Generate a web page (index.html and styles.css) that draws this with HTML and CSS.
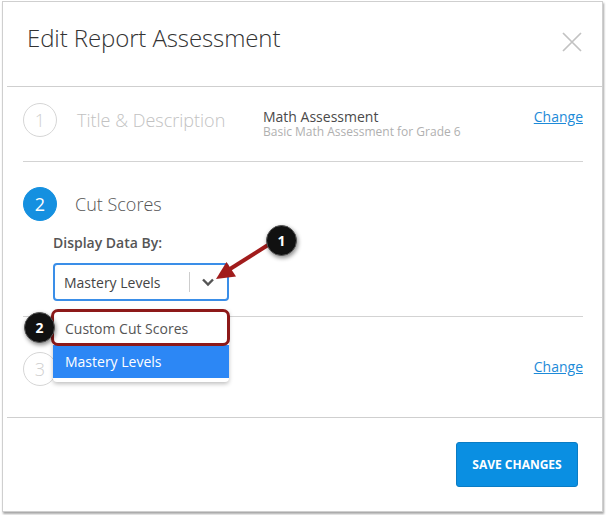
FILE: index.html
```html
<!DOCTYPE html>
<html lang="en">
  <head>
    <meta charset="UTF-8" />
    <meta name="viewport" content="width=device-width, initial-scale=1.0" />
    <title>Edit Report Assessment</title>
    <link rel="stylesheet" href="styles.css">
  </head>
  <body>
    <div class="frame">
      <div class="dialog">
        <header class="dialog-header">
          <h1 class="dialog-title">Edit Report Assessment</h1>
          <button class="close" aria-label="Close">
            <svg width="20" height="20" viewBox="0 0 20 20">
              <path d="M1 1 L19 19 M19 1 L1 19" stroke="#c2c2c2" stroke-width="1.7" fill="none" />
            </svg>
          </button>
        </header>

        <div class="dialog-body">
          <section class="step step-first">
            <div class="step-row">
              <span class="step-num">1</span>
              <span class="step-title">Title &amp; Description</span>
              <div class="step-summary">
                <div class="summary-name">Math Assessment</div>
                <div class="summary-desc">Basic Math Assessment for Grade 6</div>
              </div>
              <a class="change" href="#">Change</a>
            </div>
          </section>

          <section class="step step-active">
            <div class="step-row">
              <span class="step-num">2</span>
              <span class="step-title">Cut Scores</span>
            </div>
            <div class="field">
              <label class="field-label">Display Data By:</label>
              <div class="select">
                <span class="select-value">Mastery Levels</span>
                <span class="select-sep"></span>
                <svg class="select-arrow" width="14" height="10" viewBox="0 0 14 10">
                  <path d="M2 2.5 L7 7.5 L12 2.5" stroke="#555" stroke-width="2.4" fill="none" />
                </svg>
                <ul class="menu">
                  <li class="menu-item">Custom Cut Scores</li>
                  <li class="menu-item current">Mastery Levels</li>
                </ul>
              </div>
            </div>
          </section>

          <section class="step step-last">
            <div class="step-row">
              <span class="step-num">3</span>
              <span class="step-title"></span>
              <a class="change" href="#">Change</a>
            </div>
          </section>
        </div>

        <footer class="dialog-footer">
          <button class="save">SAVE CHANGES</button>
        </footer>
      </div>
    </div>

    <!-- callouts -->
    <div class="callout-box"></div>
    <svg class="callout-arrow" width="612" height="515" viewBox="0 0 612 515">
      <line x1="268" y1="245" x2="230" y2="269" stroke="#a11c1c" stroke-width="4" />
      <polygon points="216,279 226.5,262 236,276.5" fill="#a11c1c" />
    </svg>
    <span class="callout callout-1">1</span>
    <span class="callout callout-2">2</span>
  </body>
</html>
```

FILE: styles.css
```css
* {
  box-sizing: border-box;
}
body {
  margin: 0;
  position: relative;
  width: 612px;
  height: 515px;
  overflow: hidden;
  background: #fff;
  font-family: "Open Sans", "Liberation Sans", sans-serif;
  color: #444;
}
.frame {
  margin: 1px 0 0 2px;
  width: 601px;
  height: 511px;
  border: 1px solid #cfcfcf;
  box-shadow: 1px 2px 2px rgba(0, 0, 0, 0.35);
  padding-left: 4px;
}
.dialog {
  height: 100%;
  display: flex;
  flex-direction: column;
}

/* header */
.dialog-header {
  height: 85px;
  flex: none;
  display: flex;
  align-items: flex-start;
  padding: 20px 20px 0 20px;
  border-bottom: 1px solid #cfcfcf;
}
.dialog-title {
  margin: 0;
  font-size: 24px;
  line-height: 32px;
  font-weight: 300;
  color: #333;
  letter-spacing: -0.1px;
}
.close {
  margin: 10px 0 0 auto;
  padding: 0;
  border: none;
  background: none;
  width: 20px;
  height: 20px;
}
.close svg {
  display: block;
}

/* steps */
.dialog-body {
  flex: none;
  padding: 0 19px 0 16px;
}
.step {
  border-bottom: 1px solid #d3d3d3;
}
.step-first {
  padding: 16px 0 24px;
}
.step-active {
  padding: 25px 0 15px;
}
.step-last {
  padding: 35px 0 31px;
  border-bottom: none;
}
.step-row {
  display: flex;
  align-items: center;
  height: 34px;
}
.step-num {
  width: 34px;
  height: 34px;
  flex: none;
  border-radius: 50%;
  border: 1px solid #d6d6d6;
  display: flex;
  align-items: center;
  justify-content: center;
  font-size: 18px;
  font-weight: 300;
  color: #cfcfcf;
}
.step-title {
  width: 186px;
  margin-left: 20px;
  font-size: 18px;
  font-weight: 300;
  color: #c2c2c2;
}
.step-active .step-num {
  background: #1590e0;
  border-color: #1590e0;
  color: #fff;
  font-weight: 400;
}
.step-active .step-title {
  margin-left: 18px;
  color: #555;
}
.step-summary {
  align-self: flex-start;
  padding-top: 6px;
}
.summary-name {
  font-size: 14px;
  line-height: 16px;
  color: #4a4a4a;
}
.summary-desc {
  font-size: 12px;
  line-height: 14px;
  color: #b0b0b0;
}
.change {
  margin-left: auto;
  align-self: flex-start;
  padding-top: 6px;
  font-size: 14px;
  line-height: 16px;
  color: #1d8ad8;
  text-decoration: underline;
}
.step-last .change {
  padding-top: 7px;
}

/* select field */
.field {
  margin: 12px 0 0 30px;
}
.field-label {
  display: block;
  font-size: 14px;
  line-height: 20px;
  font-weight: 600;
  color: #555;
  margin-bottom: 10px;
}
.select {
  position: relative;
  width: 176px;
  height: 38px;
  border: 2px solid #3a8ee8;
  border-radius: 4px;
  display: flex;
  align-items: center;
  padding-left: 9px;
}
.select-value {
  font-size: 14px;
  color: #444;
}
.select-sep {
  margin-left: auto;
  width: 1px;
  height: 20px;
  background: #cdcdcd;
}
.select-arrow {
  margin: 0 12px 0 11px;
}
.menu {
  position: absolute;
  left: -2px;
  top: 45px;
  width: 176px;
  margin: 0;
  padding: 0 0 4px;
  list-style: none;
  background: #fff;
  border-radius: 0 0 4px 4px;
  box-shadow: 0 2px 4px rgba(0, 0, 0, 0.25);
  z-index: 1;
}
.menu-item {
  height: 35px;
  display: flex;
  align-items: center;
  padding: 1px 0 0 12px;
  font-size: 14px;
  color: #555;
}
.menu-item.current {
  height: 33px;
  padding-top: 0;
  background: #2c87f5;
  color: #fff;
}

/* footer */
.dialog-footer {
  flex: 1;
  border-top: 1px solid #cfcfcf;
  display: flex;
  justify-content: flex-end;
  align-items: flex-start;
  padding: 24px 24px 0 0;
}
.save {
  width: 122px;
  height: 45px;
  border: 1px solid #0a7cc4;
  border-radius: 3px;
  background: #0a8fe2;
  color: #fff;
  font-family: "Open Sans", "Liberation Sans", sans-serif;
  font-size: 12px;
  font-weight: 700;
}

/* callouts drawn over the page */
.callout-box {
  position: absolute;
  left: 51px;
  top: 309px;
  width: 179px;
  height: 37px;
  border: 3px solid #8d1919;
  border-radius: 7px;
  z-index: 2;
}
.callout-arrow {
  position: absolute;
  left: 0;
  top: 0;
  z-index: 2;
}
.callout {
  position: absolute;
  width: 31px;
  height: 31px;
  border-radius: 50%;
  background: #111;
  border: 1px solid #555;
  box-shadow: 1px 2px 4px rgba(0, 0, 0, 0.45);
  color: #fff;
  font-size: 14px;
  font-weight: 700;
  display: flex;
  align-items: center;
  justify-content: center;
  z-index: 3;
}
.callout-1 {
  left: 266px;
  top: 225px;
}
.callout-2 {
  left: 24px;
  top: 312px;
}
```
